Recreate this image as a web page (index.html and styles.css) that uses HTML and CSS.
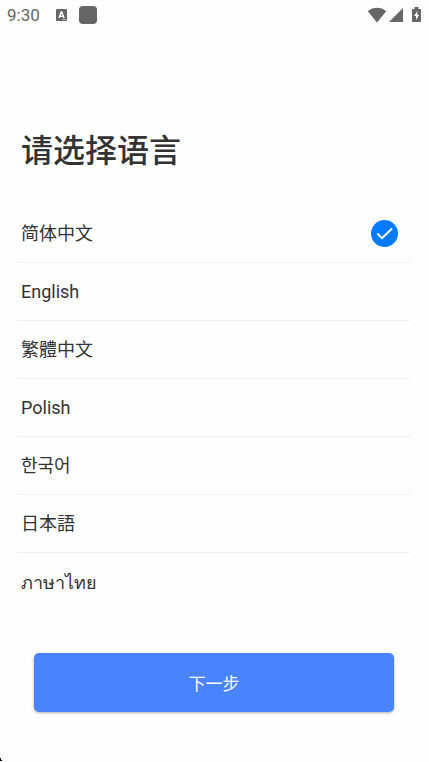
FILE: index.html
```html
<!DOCTYPE html>
<html lang="zh-CN">
<head>
<meta charset="utf-8">
<meta name="viewport" content="width=device-width, initial-scale=1">
<title>请选择语言</title>
<link rel="stylesheet" href="styles.css">
</head>
<body>
<header class="status">
  <span class="clock">9:30</span>
  <svg class="app-icon" width="12" height="14" viewBox="0 0 12 14" aria-hidden="true">
    <path fill="#666" d="M1 1h9a1 1 0 0 1 1 1v10a1 1 0 0 1-1 1H1a1 1 0 0 1-1-1V2a1 1 0 0 1 1-1z"/>
    <path fill="none" stroke="#fff" stroke-width="1.4" d="M3 10L5.200 4h.6L8 10M4 8.200h3.500"/>
    <path stroke="#bbb" d="M6 11.500h4"/>
  </svg>
  <span class="tile"></span>
  <span class="system">
    <svg width="20" height="16" viewBox="0 0 20 16" aria-hidden="true"><path fill="#666" d="M.8 4.200C6-.3 14-.3 19.200 4.200L10 15.500z"/></svg>
    <svg width="14" height="16" viewBox="0 0 14 16" aria-hidden="true"><path fill="#666" d="M14 1v14H0z"/></svg>
    <svg class="battery" width="9" height="16" viewBox="0 0 9 16" aria-hidden="true"><path fill="#666" d="M2.500 0h4v2H8a1 1 0 0 1 1 1v11a1 1 0 0 1-1 1H1a1 1 0 0 1-1-1V3a1 1 0 0 1 1-1h1.500z"/><path fill="#fff" d="M5.400 4L2 9h2v4l3.200-5.300H5.200z"/></svg>
  </span>
</header>
<main class="page">
  <h1 class="title">请选择语言</h1>
  <form class="form">
    <div class="list" role="radiogroup" aria-label="请选择语言">
      <label class="row"><span>简体中文</span><span class="pick"><input type="radio" name="lang" checked><svg class="tick" width="27" height="27" viewBox="0 0 27 27" aria-hidden="true"><path d="M6.300 13.500L11 18.200L21 8.500"/></svg></span></label>
      <label class="row"><span lang="en">English</span><span class="pick"><input type="radio" name="lang"></span></label>
      <label class="row"><span class="tc" lang="zh-TW">繁體中文</span><span class="pick"><input type="radio" name="lang"></span></label>
      <label class="row"><span lang="en">Polish</span><span class="pick"><input type="radio" name="lang"></span></label>
      <label class="row"><span class="kr" lang="ko">한국어</span><span class="pick"><input type="radio" name="lang"></span></label>
      <label class="row"><span class="jp" lang="ja">日本語</span><span class="pick"><input type="radio" name="lang"></span></label>
      <label class="row"><span class="th" lang="th">ภาษาไทย</span><span class="pick"><input type="radio" name="lang"></span></label>
    </div>
    <button class="next" type="button">下一步</button>
  </form>
</main>
<svg class="corner" width="2" height="4" viewBox="0 0 2 4" aria-hidden="true"><path d="M0 0h1v2h1v1H0z"/></svg>
</body>
</html>
```
FILE: styles.css
```css
* {
  box-sizing: border-box;
}

body {
  margin: 0;
  min-height: 100vh;
  position: relative;
  background: #fefefe;
  color: #333;
  font-family: Roboto, "Noto Sans CJK SC", sans-serif;
}

.status {
  display: flex;
  align-items: center;
  height: 29px;
  padding: 0 8px 0 7px;
  color: #666;
}

.clock {
  width: 49px;
  font-size: 17px;
  line-height: 28px;
}

.tile {
  width: 18px;
  height: 18px;
  margin-left: 11px;
  border-radius: 4px;
  background: #666;
}

.system {
  display: flex;
  align-items: center;
  gap: 2px;
  margin-left: auto;
}

.battery {
  margin-left: 7px;
}

.page {
  padding: 98px 18px 48px;
}

.title {
  margin: 0 0 30px;
  padding-left: 3px;
  font-size: 32px;
  font-weight: 500;
  line-height: 48px;
}

.row {
  display: flex;
  align-items: center;
  justify-content: space-between;
  height: 58px;
  padding: 0 13px 0 3px;
  border-bottom: 1px solid #f0f0f0;
  font-size: 18px;
  line-height: 28px;
}

.row:last-child {
  border-bottom: 0;
}

.tc {
  font-family: Roboto, "Noto Sans CJK TC", sans-serif;
}

.kr {
  font-family: Roboto, "Noto Sans CJK KR", sans-serif;
}

.jp {
  font-family: Roboto, "Noto Sans CJK JP", sans-serif;
}

.th {
  font-family: "Noto Sans", sans-serif;
}

.pick {
  display: grid;
}

.pick > * {
  grid-area: 1 / 1;
}

.pick input {
  appearance: none;
  width: 27px;
  height: 27px;
  margin: 0;
  border-radius: 50%;
}

.pick input:checked {
  background: #007aff;
}

.tick {
  position: relative;
  fill: none;
  stroke: #fff;
  stroke-width: 2;
  pointer-events: none;
}

.next {
  display: block;
  width: calc(100% - 33px);
  height: 59px;
  margin: 42px 16px 0;
  padding: 0;
  border: 0;
  border-radius: 5px;
  background: #4984ff;
  box-shadow: 0 1px 3px rgba(0, 0, 0, 0.3);
  color: #fff;
  font-family: inherit;
  font-size: 17px;
}

.corner {
  position: absolute;
  left: 0;
  bottom: 0;
}
```
